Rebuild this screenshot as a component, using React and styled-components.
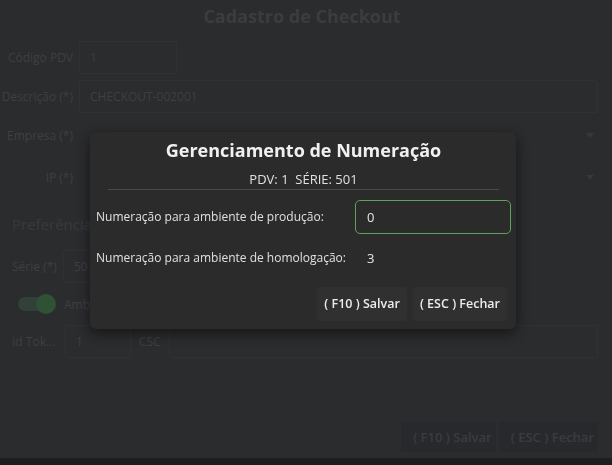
import styled, { createGlobalStyle } from "styled-components";

const GlobalStyle = createGlobalStyle`
    * {
        box-sizing: border-box;
    }
    html, body {
        margin: 0;
        padding: 0;
        background: #3e3f43;
        font-family: "Open Sans", "Noto Sans", sans-serif;
    }
`;

const App = () => {
    return (
        <>
            <GlobalStyle />
            <Page>
                <Title>Cadastro de Checkout</Title>
                <Form>
                    <Row>
                        <Label>Código PDV</Label>
                        <Input width="98px">1</Input>
                    </Row>
                    <Row>
                        <Label>Descrição (*)</Label>
                        <Input>CHECKOUT-002001</Input>
                    </Row>
                    <Row>
                        <Label>Empresa (*)</Label>
                        <Select>
                            <Arrow />
                        </Select>
                    </Row>
                    <Row spaced>
                        <Label>IP (*)</Label>
                        <Select>
                            <Arrow />
                        </Select>
                    </Row>
                </Form>
                <Section>Preferências</Section>
                <Form second>
                    <Row>
                        <ShortLabel>Série (*)</ShortLabel>
                        <Input width="140px">501</Input>
                    </Row>
                    <ToggleRow>
                        <Toggle>
                            <Knob />
                        </Toggle>
                        <ToggleText>Ambiente de produção</ToggleText>
                    </ToggleRow>
                    <Row>
                        <ShortLabel wide>Id Token</ShortLabel>
                        <Input width="66px">1</Input>
                        <InlineLabel>CSC</InlineLabel>
                        <Input />
                    </Row>
                </Form>
                <Actions>
                    <PageButton>( F10 ) Salvar</PageButton>
                    <PageButton>( ESC ) Fechar</PageButton>
                </Actions>
            </Page>
            <Footer />

            <Overlay>
                <Modal>
                    <ModalTitle>Gerenciamento de Numeração</ModalTitle>
                    <Info>PDV: 1&nbsp; SÉRIE: 501</Info>
                    <Divider />
                    <Field>
                        <FieldLabel>Numeração para ambiente de produção:</FieldLabel>
                        <NumberInput active>0</NumberInput>
                    </Field>
                    <Field>
                        <FieldLabel>Numeração para ambiente de homologação:</FieldLabel>
                        <NumberInput>3</NumberInput>
                    </Field>
                    <ModalActions>
                        <Button>( F10 ) Salvar</Button>
                        <Button>( ESC ) Fechar</Button>
                    </ModalActions>
                </Modal>
            </Overlay>
        </>
    );
};

const Page = styled.div`
    height: 458px;
    padding: 2px 14px 6px 0;
    display: flex;
    flex-direction: column;
`;

const Title = styled.h1`
    margin: 0;
    height: 33px;
    line-height: 28px;
    text-align: center;
    font-size: 18px;
    font-weight: 700;
    color: #56575b;
    padding-left: 6px;
`;

const Form = styled.div`
    display: flex;
    flex-direction: column;
    gap: 6px;
    margin-top: ${(p) => (p.second ? "12px" : "6px")};
`;

const Row = styled.div`
    display: flex;
    align-items: center;
    height: 33px;
    gap: 6px;
    margin-top: ${(p) => (p.spaced ? "3px" : "0")};
`;

const Label = styled.span`
    width: 73px;
    text-align: right;
    font-size: 12px;
    color: #5a5b5f;
    white-space: nowrap;
`;

const ShortLabel = styled.span`
    width: ${(p) => (p.wide ? "59px" : "57px")};
    padding-left: 12px;
    font-size: 12px;
    color: #5a5b5f;
    white-space: nowrap;
    overflow: hidden;
    text-overflow: ellipsis;
`;

const InlineLabel = styled.span`
    font-size: 12px;
    color: #5a5b5f;
    padding: 0 2px;
`;

const Input = styled.div`
    height: 33px;
    width: ${(p) => p.width || "auto"};
    flex: ${(p) => (p.width ? "none" : "1")};
    border: 1px solid #46474c;
    border-radius: 3px;
    padding: 0 10px;
    display: flex;
    align-items: center;
    font-size: 12px;
    color: #5a5b5f;
`;

const Select = styled.div`
    flex: 1;
    height: 33px;
    position: relative;
`;

const Arrow = styled.span`
    position: absolute;
    right: 4px;
    top: 14px;
    border-left: 4px solid transparent;
    border-right: 4px solid transparent;
    border-top: 5px solid #505155;
`;

const Section = styled.h2`
    margin: 16px 0 0 12px;
    font-size: 15px;
    font-weight: 400;
    color: #525357;
    height: 28px;
    line-height: 28px;
`;

const ToggleRow = styled.div`
    display: flex;
    align-items: center;
    height: 30px;
    gap: 10px;
    padding-left: 18px;
`;

const Toggle = styled.div`
    width: 36px;
    height: 14px;
    border-radius: 7px;
    background: #4a5c4f;
    position: relative;
`;

const Knob = styled.span`
    position: absolute;
    right: -2px;
    top: -3px;
    width: 20px;
    height: 20px;
    border-radius: 50%;
    background: #467449;
`;

const ToggleText = styled.span`
    font-size: 12px;
    color: #5a5b5f;
`;

const Actions = styled.div`
    margin-top: auto;
    display: flex;
    justify-content: flex-end;
    gap: 3px;
`;

const PageButton = styled.div`
    height: 30px;
    padding: 0 4px 0 12px;
    display: flex;
    align-items: center;
    font-size: 13px;
    font-weight: 600;
    color: #55565a;
    background: #3a3b3f;
    border-radius: 3px;
`;

const Footer = styled.div`
    height: 7px;
    background: #2b2c2f;
`;

const Overlay = styled.div`
    position: fixed;
    inset: 0;
    background: rgba(0, 0, 0, 0.3);
    display: flex;
    align-items: center;
    justify-content: center;
    padding: 0 6px 5px 0;
`;

const Modal = styled.div`
    width: 426px;
    background: #2b2b2b;
    border-radius: 6px;
    box-shadow: 0 4px 14px rgba(0, 0, 0, 0.55);
    padding: 4px 5px 8px 6px;
    display: flex;
    flex-direction: column;
    color: #e6e6e6;
`;

const ModalTitle = styled.div`
    text-align: center;
    font-size: 18px;
    font-weight: 700;
    line-height: 28px;
    color: #f0f0f0;
`;

const Info = styled.div`
    margin-top: 6px;
    text-align: center;
    font-size: 13px;
    line-height: 18px;
    color: #e0e0e0;
`;

const Divider = styled.hr`
    margin: 1px 12px 10px 12px;
    border: none;
    border-top: 1px solid #4a4a4a;
`;

const Field = styled.div`
    display: flex;
    align-items: center;
    height: 34px;
    margin-bottom: 7px;
`;

const FieldLabel = styled.span`
    width: 259px;
    font-size: 12px;
    white-space: nowrap;
    color: #e0e0e0;
`;

const NumberInput = styled.div`
    flex: 1;
    height: 34px;
    display: flex;
    align-items: center;
    padding-left: 11px;
    font-size: 13px;
    color: #e6e6e6;
    border-radius: 5px;
    border: 1px solid ${(p) => (p.active ? "#5fa35a" : "transparent")};
`;

const ModalActions = styled.div`
    display: flex;
    justify-content: flex-end;
    gap: 6px;
    margin-top: 5px;
    padding-right: 4px;
`;

const Button = styled.div`
    height: 34px;
    padding: 0 7px;
    display: flex;
    align-items: center;
    font-size: 12.5px;
    font-weight: 600;
    color: #ececec;
    background: #303030;
    border-radius: 4px;
`;

export default App;
